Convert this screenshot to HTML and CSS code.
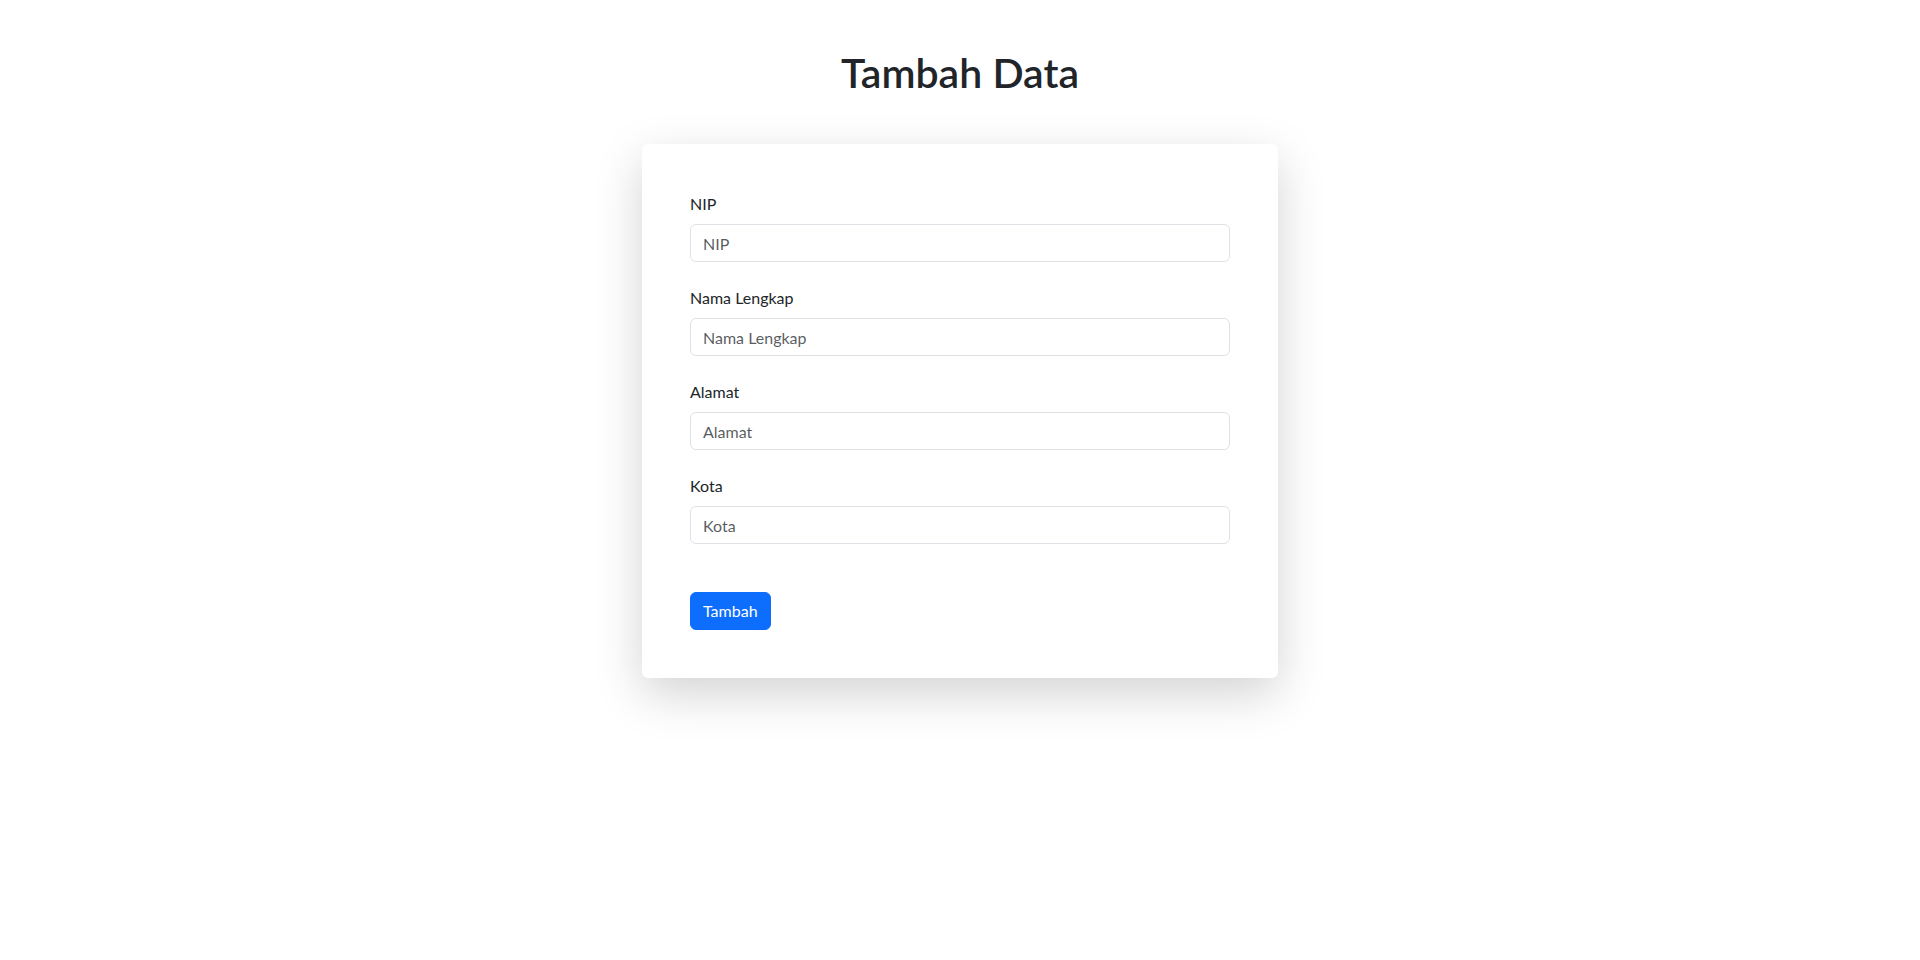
FILE: index.html
```html
<!DOCTYPE html>
<html lang="id">
<head>
<meta charset="utf-8">
<title>Tambah Data</title>
<link rel="stylesheet" href="styles.css">
</head>
<body>
<div class="container">
  <h1 class="title">Tambah Data</h1>
  <div class="row">
    <div class="col">
      <div class="card">
        <form class="form">
          <div class="field">
            <label class="label" for="nip">NIP</label>
            <input class="input" id="nip" type="text" placeholder="NIP">
          </div>
          <div class="field">
            <label class="label" for="nama">Nama Lengkap</label>
            <input class="input" id="nama" type="text" placeholder="Nama Lengkap">
          </div>
          <div class="field">
            <label class="label" for="alamat">Alamat</label>
            <input class="input" id="alamat" type="text" placeholder="Alamat">
          </div>
          <div class="field">
            <label class="label" for="kota">Kota</label>
            <input class="input" id="kota" type="text" placeholder="Kota">
          </div>
          <div class="actions">
            <button class="btn" type="button">Tambah</button>
          </div>
        </form>
      </div>
    </div>
  </div>
</div>
</body>
</html>
```
FILE: styles.css
```css
* { box-sizing: border-box; }
html, body { margin: 0; padding: 0; background: #fff; }
body {
  min-height: 100vh;
  font-family: Lato, "Noto Sans", "Liberation Sans", sans-serif;
  font-size: 16px;
  line-height: 1.5;
  color: #212529;
}
.container {
  max-width: 1320px;
  margin: 0 auto;
  padding: 48px 12px 96px;
}
.title {
  margin: 0 0 48px;
  padding-top: 1px;
  font-size: 41px;
  font-weight: 600;
  line-height: 47px;
  text-align: center;
  color: #212529;
}
.row { display: flex; justify-content: center; }
.col { width: 660px; padding: 0 12px; }
.card {
  background: #fff;
  border-radius: 6px;
  padding: 48px;
  box-shadow: 0 16px 48px rgba(0,0,0,0.175);
}
.form { display: flex; flex-direction: column; }
.field { display: flex; flex-direction: column; margin-bottom: 24px; }
.label { margin-bottom: 8px; font-size: 16px; line-height: 24px; }
.input {
  display: block;
  width: 100%;
  height: 38px;
  padding: 6px 12px;
  font: inherit;
  font-size: 16px;
  line-height: 24px;
  color: #212529;
  background: #fff;
  border: 1px solid #dee2e6;
  border-radius: 6px;
  outline: none;
}
.input::placeholder { color: rgba(33,37,41,0.75); opacity: 1; }
.actions { margin-top: 24px; }
.btn {
  display: inline-block;
  height: 38px;
  padding: 6px 12px;
  font: inherit;
  font-size: 16px;
  line-height: 24px;
  color: #fff;
  background: #0d6efd;
  border: 1px solid #0d6efd;
  border-radius: 6px;
  cursor: pointer;
}
```
